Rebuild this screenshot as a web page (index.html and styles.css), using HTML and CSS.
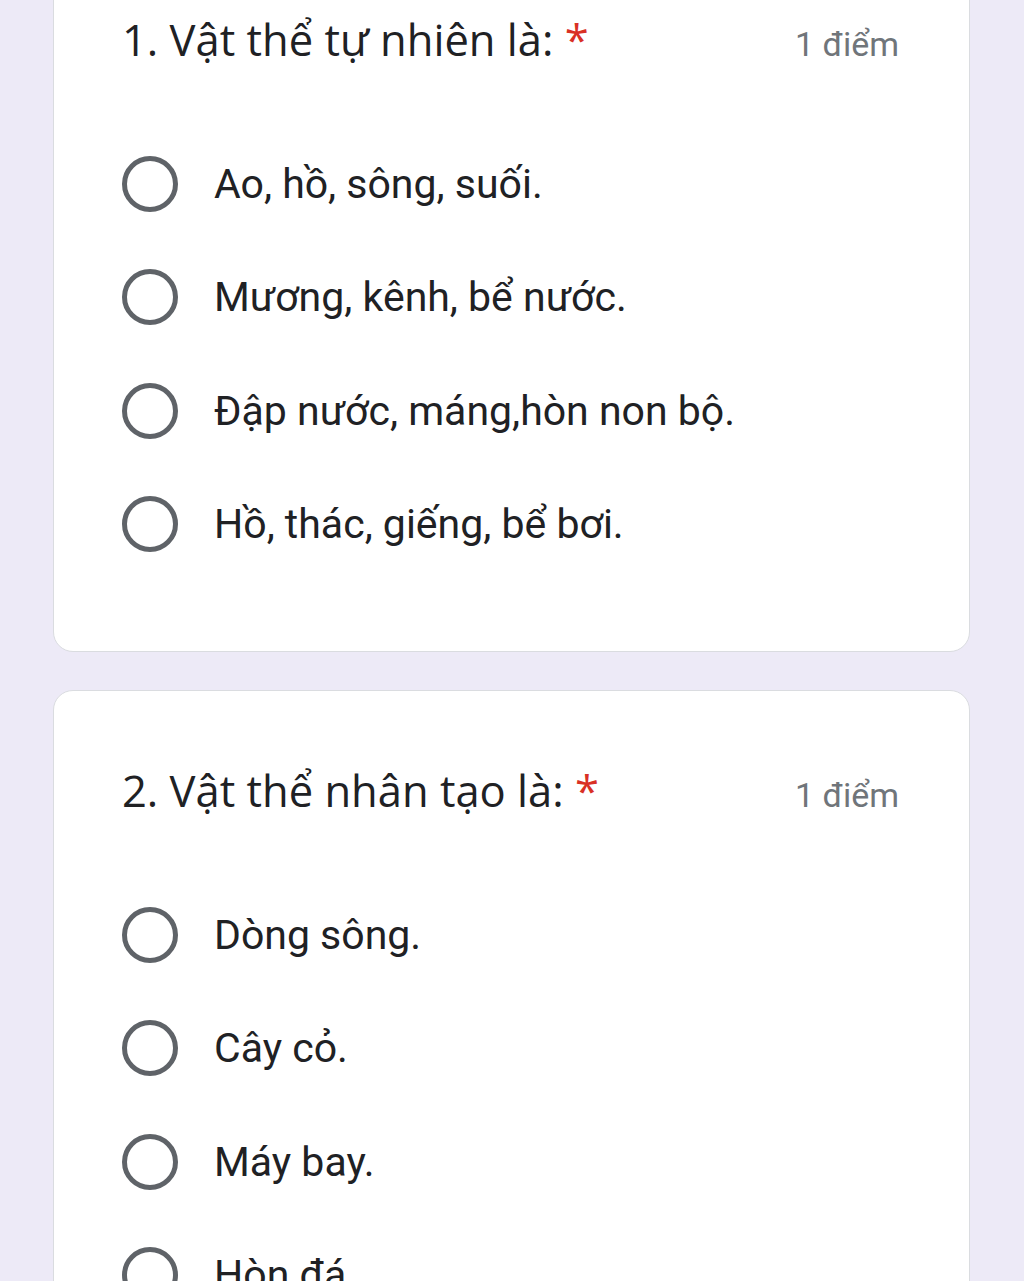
FILE: index.html
```html
<!DOCTYPE html>
<html>
	<head>
		<meta charset="UTF-8">
		<title>Bài kiểm tra</title>
		<link rel="stylesheet" href="styles.css">
	</head>
	<body>
		<div class="form">
			<div class="card first">
				<div class="head">
					<div class="title">1. Vật thể tự nhiên là: <span class="req">*</span></div>
					<div class="points">1 điểm</div>
				</div>
				<div class="options">
					<div class="opt"><span class="radio"></span><span class="label">Ao, hồ, sông, suối.</span></div>
					<div class="opt"><span class="radio"></span><span class="label">Mương, kênh, bể nước.</span></div>
					<div class="opt"><span class="radio"></span><span class="label">Đập nước, máng,hòn non bộ.</span></div>
					<div class="opt"><span class="radio"></span><span class="label">Hồ, thác, giếng, bể bơi.</span></div>
				</div>
			</div>
			<div class="card">
				<div class="head">
					<div class="title">2. Vật thể nhân tạo là: <span class="req">*</span></div>
					<div class="points">1 điểm</div>
				</div>
				<div class="options">
					<div class="opt"><span class="radio"></span><span class="label">Dòng sông.</span></div>
					<div class="opt"><span class="radio"></span><span class="label">Cây cỏ.</span></div>
					<div class="opt"><span class="radio"></span><span class="label">Máy bay.</span></div>
					<div class="opt"><span class="radio"></span><span class="label">Hòn đá.</span></div>
				</div>
			</div>
		</div>
	</body>
</html>
```
FILE: styles.css
```css
html, body{
	margin: 0;
	height: 1281px;
	overflow: hidden;
	background-color: #edeaf7;
}
.form{
	padding: 0 54px 0 53px;
}
.card{
	background-color: #fff;
	border: 1.5px solid #dadce0;
	border-radius: 20px;
	padding: 76px 70px 70px 68px;
	margin-bottom: 38px;
}
.card.first{
	margin-top: -61px;
}
.head{
	display: flex;
	justify-content: space-between;
	align-items: baseline;
	height: 48px;
	line-height: 48px;
}
.title{
	font-family: "Open Sans", sans-serif;
	font-size: 43.5px;
	color: #202124;
}
.req{
	color: #d93025;
}
.points{
	font-family: Roboto, sans-serif;
	font-size: 34px;
	color: #70757a;
}
.options{
	margin-top: 63px;
}
.opt{
	display: flex;
	align-items: center;
	height: 113.5px;
}
.radio{
	width: 46px;
	height: 46px;
	border: 5px solid #5f6368;
	border-radius: 50%;
	flex-shrink: 0;
	margin-right: 36px;
}
.label{
	font-family: Roboto, sans-serif;
	font-size: 41px;
	color: #202124;
}
```
